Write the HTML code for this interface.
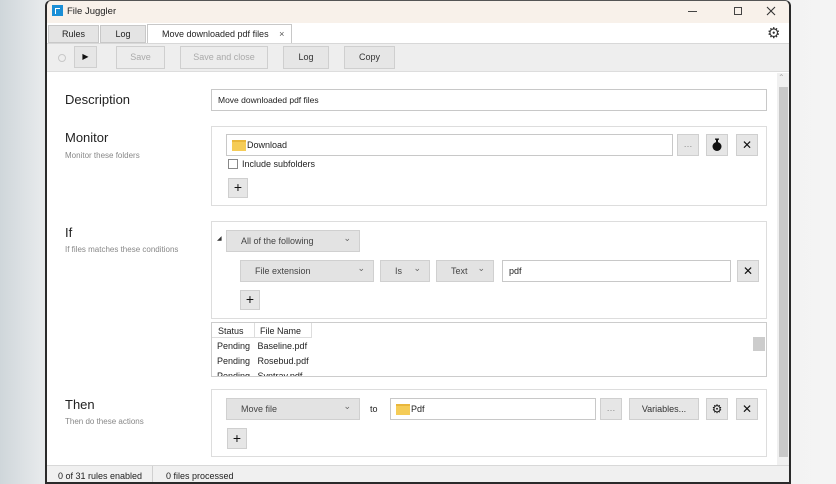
<!DOCTYPE html>
<html><head><meta charset="utf-8"><style>
*{box-sizing:border-box;margin:0;padding:0}
body{width:836px;height:484px;overflow:hidden;font-family:"Liberation Sans",sans-serif;font-size:9px;color:#222;background:linear-gradient(90deg,#cfd6da 0,#e6e9eb 40px,#f3f3f3 790px,#f4f4f4 100%);position:relative}
.a{position:absolute}
.win{left:45px;top:0;width:746px;height:484px;background:#fff;border:2px solid #2a2a2a;border-top:1px solid #555;border-radius:6px 6px 0 0;overflow:hidden}
.btn{position:absolute;background:#e6e6e6;border:1px solid #cfcfcf;text-align:center;color:#333}
.box{position:absolute;border:1px solid #ddd;background:#fff}
.inp{position:absolute;border:1px solid #c8c8c8;background:#fff;padding-left:6px}
.dd{position:absolute;background:#e3e3e3;border:1px solid #d0d0d0;color:#444;padding-left:14px}
.dd:after{content:"⌄";position:absolute;right:8px;top:-3px;font-size:9px;color:#666}
.h{font-size:13px;color:#222}
.sub{font-size:8px;color:#888}
.folder{display:inline-block;width:14px;height:11px;background:#f5cc57;vertical-align:middle;margin-right:1px;border-top:2px solid #e9b73c}
</style></head><body>
<div class="a win">
 <div class="a" style="left:0;top:0;width:744px;height:22px;background:#f8f1ea"></div>
 <div class="a" style="left:5px;top:4px;width:11px;height:11px;background:#1b8fd6"><div class="a" style="left:3px;top:3px;width:5px;height:6px;border-left:1.5px solid #fff;border-top:1.5px solid #fff"></div></div>
 <div class="a" style="left:20px;top:5px;font-size:9.5px">File Juggler</div>
 <div class="a" style="left:641px;top:10px;width:9px;border-top:1px solid #444"></div>
 <div class="a" style="left:687px;top:6px;width:8px;height:8px;border:1px solid #444"></div>
 <svg class="a" style="left:719px;top:5px" width="10" height="10"><path d="M1 1L9 9M9 1L1 9" stroke="#333" stroke-width="1.1"/></svg>
 <div class="a" style="left:0;top:22px;width:744px;height:20px;background:#fff"></div>
 <div class="a" style="left:1px;top:24px;width:51px;height:18px;background:#e4e4e4;border:1px solid #c8c8c8;text-align:center;line-height:16px">Rules</div>
 <div class="a" style="left:53px;top:24px;width:46px;height:18px;background:#e4e4e4;border:1px solid #c8c8c8;text-align:center;line-height:16px">Log</div>
 <div class="a" style="left:100px;top:23px;width:145px;height:20px;background:#fff;border:1px solid #c8c8c8;border-bottom:none;padding-left:14px;line-height:18px">Move downloaded pdf files <span style="margin-left:8px;color:#555">×</span></div>
 <div class="a" style="left:720px;top:23px;font-size:15px;color:#333">⚙</div>
 <div class="a" style="left:0;top:42px;width:744px;height:29px;background:#eeeeee;border-top:1px solid #d8d8d8;border-bottom:1px solid #ddd"></div>
 <div class="a" style="left:11px;top:53px;width:8px;height:8px;border-radius:50%;border:1px solid #c8c8c8"></div>
 <div class="btn" style="left:27px;top:45px;width:23px;height:22px;line-height:20px;font-size:8px;color:#111">▶</div>
 <div class="btn" style="left:69px;top:45px;width:49px;height:23px;line-height:21px;color:#aaa;background:#ececec">Save</div>
 <div class="btn" style="left:133px;top:45px;width:88px;height:23px;line-height:21px;color:#aaa;background:#ececec">Save and close</div>
 <div class="btn" style="left:236px;top:45px;width:46px;height:23px;line-height:21px">Log</div>
 <div class="btn" style="left:297px;top:45px;width:51px;height:23px;line-height:21px">Copy</div>
 <div class="a" style="left:730px;top:72px;width:13px;height:392px;background:#f0f0f0"></div>
 <div class="a" style="left:732px;top:86px;width:9px;height:370px;background:#c8c8c8"></div>
 <div class="a" style="left:731px;top:72px;font-size:8px;color:#aaa">⌃</div>
 <div class="a h" style="left:18px;top:91px">Description</div>
 <div class="inp" style="left:164px;top:88px;width:556px;height:22px;line-height:20px;font-size:8.5px">Move downloaded pdf files</div>
 <div class="a h" style="left:18px;top:129px">Monitor</div>
 <div class="a sub" style="left:18px;top:150px">Monitor these folders</div>
 <div class="box" style="left:164px;top:125px;width:556px;height:80px"></div>
 <div class="inp" style="left:179px;top:133px;width:447px;height:22px;line-height:20px;padding-left:5px"><span class="folder"></span>Download</div>
 <div class="btn" style="left:630px;top:133px;width:22px;height:22px;line-height:18px;color:#888">…</div>
 <div class="btn" style="left:659px;top:133px;width:22px;height:22px">
  <svg width="20" height="20" style="position:absolute;left:0;top:0"><circle cx="10" cy="11.5" r="4.5" fill="#111"/><rect x="9" y="4.5" width="2" height="3" fill="#111"/><rect x="8" y="3.5" width="4" height="1.3" fill="#111"/></svg></div>
 <div class="btn" style="left:689px;top:133px;width:22px;height:22px;font-size:12px;line-height:20px;color:#111">✕</div>
 <div class="a" style="left:181px;top:158px;width:10px;height:10px;border:1px solid #888;background:#fff"></div>
 <div class="a" style="left:195px;top:158px">Include subfolders</div>
 <div class="btn" style="left:181px;top:177px;width:20px;height:20px;font-size:14px;line-height:17px;color:#111">+</div>
 <div class="a h" style="left:18px;top:224px">If</div>
 <div class="a sub" style="left:18px;top:244px">If files matches these conditions</div>
 <div class="box" style="left:164px;top:220px;width:556px;height:98px"></div>
 <div class="a" style="left:170px;top:234px;font-size:6px;color:#333">◢</div>
 <div class="dd" style="left:179px;top:229px;width:134px;height:22px;line-height:20px">All of the following</div>
 <div class="dd" style="left:193px;top:259px;width:134px;height:22px;line-height:20px">File extension</div>
 <div class="dd" style="left:333px;top:259px;width:50px;height:22px;line-height:20px">Is</div>
 <div class="dd" style="left:389px;top:259px;width:58px;height:22px;line-height:20px">Text</div>
 <div class="inp" style="left:455px;top:259px;width:229px;height:22px;line-height:20px">pdf</div>
 <div class="btn" style="left:690px;top:259px;width:22px;height:22px;font-size:12px;line-height:20px;color:#111">✕</div>
 <div class="btn" style="left:193px;top:289px;width:20px;height:20px;font-size:14px;line-height:17px;color:#111">+</div>
 <div class="box" style="left:164px;top:321px;width:556px;height:55px;overflow:hidden;border-color:#ccc">
  <div class="a" style="left:0;top:0;width:100px;height:15px;border-bottom:1px solid #ddd;border-right:1px solid #ddd"></div>
  <div class="a" style="left:6px;top:3px">Status</div><div class="a" style="left:48px;top:3px">File Name</div>
  <div class="a" style="left:42px;top:0;height:15px;border-left:1px solid #ddd"></div>
  <div class="a" style="left:5px;top:18px">Pending &nbsp; Baseline.pdf</div>
  <div class="a" style="left:5px;top:33px">Pending &nbsp; Rosebud.pdf</div>
  <div class="a" style="left:5px;top:48px">Pending &nbsp; Syntray.pdf</div>
  <div class="a" style="left:541px;top:14px;width:12px;height:14px;background:#ccc"></div>
 </div>
 <div class="a h" style="left:18px;top:396px">Then</div>
 <div class="a sub" style="left:18px;top:416px">Then do these actions</div>
 <div class="box" style="left:164px;top:388px;width:556px;height:68px"></div>
 <div class="dd" style="left:179px;top:397px;width:134px;height:22px;line-height:20px">Move file</div>
 <div class="a" style="left:323px;top:403px">to</div>
 <div class="inp" style="left:343px;top:397px;width:206px;height:22px;line-height:20px;padding-left:5px"><span class="folder"></span>Pdf</div>
 <div class="btn" style="left:553px;top:397px;width:22px;height:22px;line-height:18px;color:#888">…</div>
 <div class="btn" style="left:582px;top:397px;width:70px;height:22px;line-height:20px">Variables...</div>
 <div class="btn" style="left:659px;top:397px;width:22px;height:22px;font-size:12px;line-height:20px;color:#111">⚙</div>
 <div class="btn" style="left:689px;top:397px;width:22px;height:22px;font-size:12px;line-height:20px;color:#111">✕</div>
 <div class="btn" style="left:180px;top:427px;width:20px;height:21px;font-size:14px;line-height:18px;color:#111">+</div>
 <div class="a" style="left:0;top:464px;width:744px;height:20px;background:#f0f0f0;border-top:1px solid #d8d8d8"></div>
 <div class="a" style="left:11px;top:470px">0 of 31 rules enabled</div>
 <div class="a" style="left:105px;top:465px;height:18px;border-left:1px solid #d0d0d0"></div>
 <div class="a" style="left:119px;top:470px">0 files processed</div>
</div>
</body></html>
